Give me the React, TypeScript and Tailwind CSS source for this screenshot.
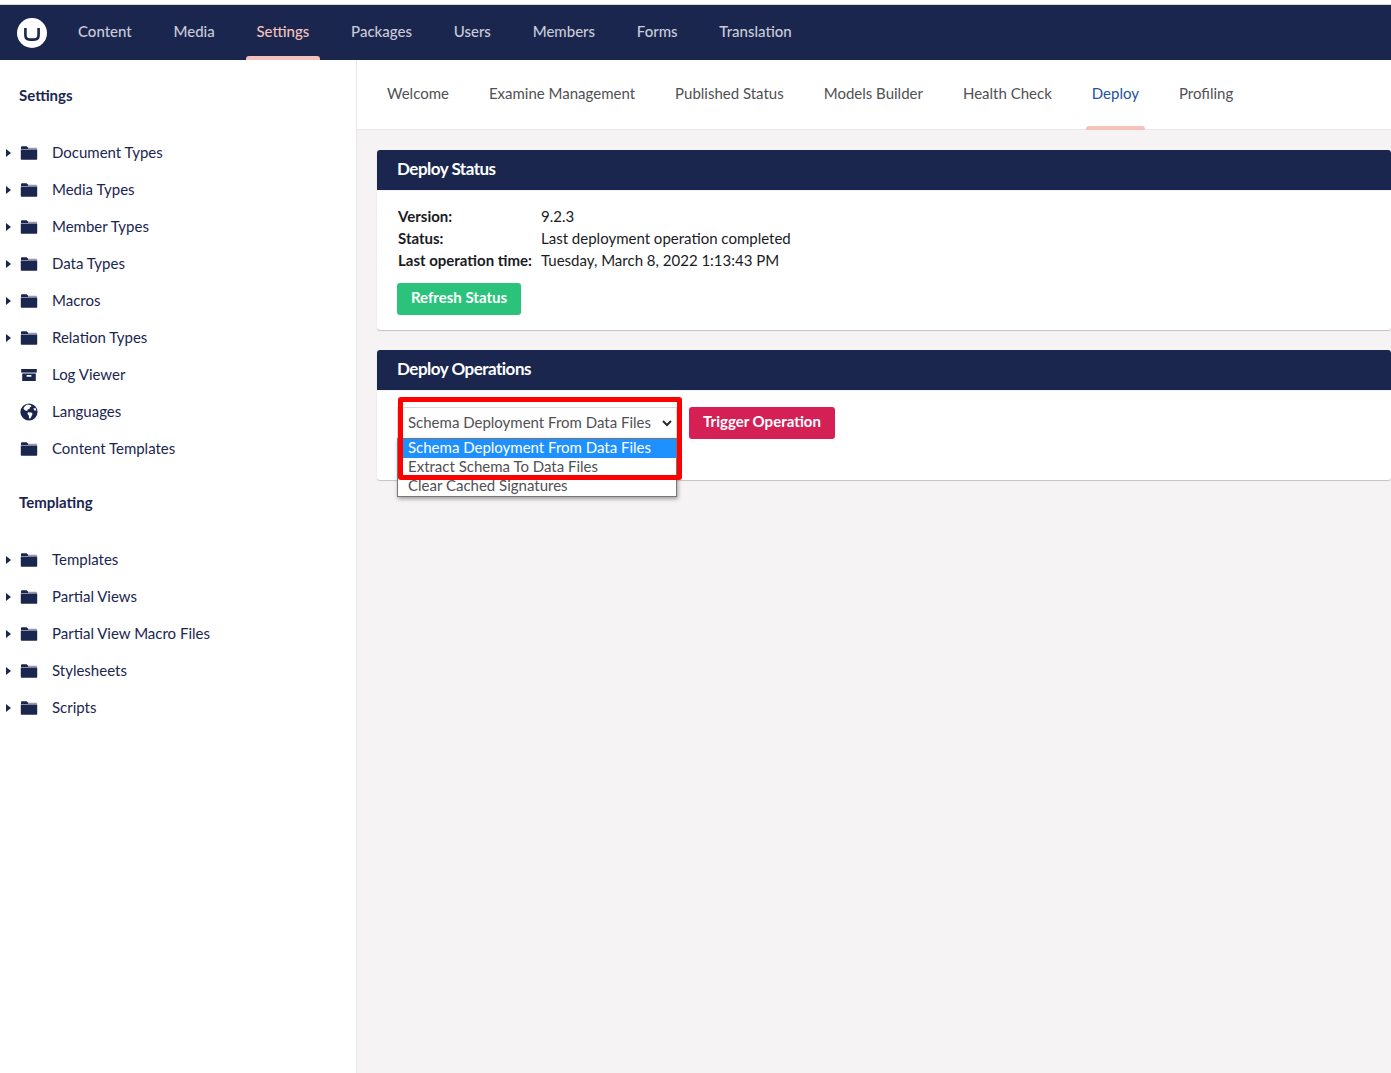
import React from 'react';

const font = '[font-family:Lato,"Open_Sans",sans-serif]';

function Folder() {
  return (
    <svg width="18" height="16" viewBox="0 0 18 16" className="block">
      <path d="M1 4 V2.4 C1 1.6 1.5 1.2 2.2 1.2 H6.6 L8.2 2.8 V4 Z" fill="#1b264f" />
      <path d="M8 2.8 H16 C16.6 2.8 17 3.2 17 3.8 V4.2 H8 Z" fill="#9499ae" />
      <path d="M0.8 4.4 H17.2 V13.8 C17.2 14.4 16.8 14.8 16.2 14.8 H1.8 C1.2 14.8 0.8 14.4 0.8 13.8 Z" fill="#1b264f" />
    </svg>
  );
}

function Archive() {
  return (
    <svg width="18" height="16" viewBox="0 0 18 16" className="block">
      <path d="M1.2 2 H16.8 V5.6 H1.2 Z" fill="#1b264f" />
      <path d="M2.2 6.4 H15.8 V14 H2.2 Z M6.6 8 V9.8 H11.4 V8 Z" fill="#1b264f" fillRule="evenodd" />
    </svg>
  );
}

function Globe() {
  return (
    <svg width="18" height="18" viewBox="0 0 18 18" className="block">
      <circle cx="9" cy="9" r="8.6" fill="#1b264f" />
      <path d="M7 1.6 L10.4 2 L11.6 3.2 L9.8 4.4 L9.4 6 L7.6 6.6 L7.2 8 L4.8 7.2 L3.4 5.6 L4.6 3.4 Z" fill="#fff" />
      <path d="M8 9.2 L11.2 9.4 L12.6 10.8 L11.6 13 L10.4 15.6 L9.2 15.4 L8.8 12.4 L7.4 10.8 Z" fill="#fff" />
      <path d="M13.4 5.4 L15.6 5 L16.4 7.6 L14.4 7.4 Z" fill="#fff" />
    </svg>
  );
}

function TreeItem({ label, icon = 'folder', arrow = true }: { label: string; icon?: string; arrow?: boolean }) {
  return (
    <div className="flex h-[37px] items-center text-[15px] text-[#1b264f]">
      <div className="flex w-[20px] shrink-0 justify-start pl-[6px]">
        {arrow && <div className="h-0 w-0 border-y-[4px] border-l-[5px] border-y-transparent border-l-[#1b264f]" />}
      </div>
      <div className="flex w-[18px] shrink-0 justify-center">
        {icon === 'folder' && <Folder />}
        {icon === 'archive' && <Archive />}
        {icon === 'globe' && <Globe />}
      </div>
      <span className="ml-[14px]">{label}</span>
    </div>
  );
}

function Card({ title, className, children }: { title: string; className: string; children: React.ReactNode }) {
  return (
    <div className={`rounded-[3px] bg-white shadow-[0_1px_1px_rgba(0,0,0,0.2)] ${className}`}>
      <div className="flex h-[40px] items-center rounded-t-[3px] bg-[#1b264f] pb-[2px] pl-[20px] text-[17px] font-bold tracking-[-0.5px] text-white shadow-[0_1px_1px_rgba(0,0,0,0.06)]">
        {title}
      </div>
      {children}
    </div>
  );
}

const navItems = ['Content', 'Media', 'Settings', 'Packages', 'Users', 'Members', 'Forms', 'Translation'];
const tabs = ['Welcome', 'Examine Management', 'Published Status', 'Models Builder', 'Health Check', 'Deploy', 'Profiling'];

export default function App() {
  return (
    <div className={`relative flex h-[1073px] w-full flex-col overflow-hidden bg-white ${font}`}>
      <div className="h-[5px] shrink-0 border-b border-[#d8d8d8] bg-white" />

      {/* top bar */}
      <header className="flex h-[55px] shrink-0 items-stretch bg-[#1b264f]">
        <div className="flex w-[67px] shrink-0 items-center pl-[17px]">
          <div className="flex h-[30px] w-[30px] items-center justify-center rounded-full bg-white">
            <svg width="16" height="13" viewBox="0 0 16 13" className="mt-[3px]">
              <path d="M1.4 0 V7 Q1.4 11.6 6 11.6 H10 Q14.6 11.6 14.6 7 V0" fill="none" stroke="#1b264f" strokeWidth="2.6" />
            </svg>
          </div>
        </div>
        <nav className="flex items-stretch">
          {navItems.map((item) => (
            <div
              key={item}
              className={`relative mr-[19.75px] flex items-center px-[11px] pb-[2px] text-[15px] font-medium ${
                item === 'Settings' ? 'text-[#f5c1bc]' : 'text-[#c9cbd8]'
              }`}
            >
              {item}
              {item === 'Settings' && (
                <div className="absolute bottom-0 left-0 right-0 h-[4px] rounded-t-[3px] bg-[#f5c1bc]" />
              )}
            </div>
          ))}
        </nav>
      </header>

      <div className="flex min-h-0 flex-1">
        {/* sidebar */}
        <aside className="w-[357px] shrink-0 border-r border-[#e9e9eb] bg-white">
          <div className="flex h-[74px] items-center pb-[4px] pl-[19px] text-[15px] font-bold text-[#1b264f]">Settings</div>
          <TreeItem label="Document Types" />
          <TreeItem label="Media Types" />
          <TreeItem label="Member Types" />
          <TreeItem label="Data Types" />
          <TreeItem label="Macros" />
          <TreeItem label="Relation Types" />
          <TreeItem label="Log Viewer" icon="archive" arrow={false} />
          <TreeItem label="Languages" icon="globe" arrow={false} />
          <TreeItem label="Content Templates" arrow={false} />
          <div className="flex h-[74px] items-center pb-[3px] pl-[19px] text-[15px] font-bold text-[#1b264f]">Templating</div>
          <TreeItem label="Templates" />
          <TreeItem label="Partial Views" />
          <TreeItem label="Partial View Macro Files" />
          <TreeItem label="Stylesheets" />
          <TreeItem label="Scripts" />
        </aside>

        <div className="flex min-w-0 flex-1 flex-col bg-[#f5f3f4]">
          {/* tabs */}
          <div className="flex h-[70px] shrink-0 items-stretch border-b border-[#e9e9eb] bg-white pl-[20px]">
            {tabs.map((tab) => (
              <div
                key={tab}
                className={`relative mr-[20px] flex items-center px-[10px] text-[15px] ${
                  tab === 'Deploy' ? 'text-[#2152a3]' : 'text-[#515054]'
                }`}
              >
                <span className="relative top-[-1px]">{tab}</span>
                {tab === 'Deploy' && (
                  <div className="absolute bottom-[-1px] left-[4px] right-[4px] h-[4px] rounded-t-[3px] bg-[#f5c1bc]" />
                )}
              </div>
            ))}
          </div>

          {/* panels */}
          <div className="flex flex-col gap-[20px] pl-[20px] pt-[20px]">
            <Card title="Deploy Status" className="h-[180px]">
              <div className="pl-[21px] pt-[15px] text-[15px] leading-[22px] text-[#1b1b1f]">
                <div className="flex">
                  <span className="w-[143px] font-bold">Version:</span>
                  <span>9.2.3</span>
                </div>
                <div className="flex">
                  <span className="w-[143px] font-bold">Status:</span>
                  <span>Last deployment operation completed</span>
                </div>
                <div className="flex">
                  <span className="w-[143px] font-bold">Last operation time:</span>
                  <span>Tuesday, March 8, 2022 1:13:43 PM</span>
                </div>
              </div>
              <button className="ml-[20px] mt-[12px] flex h-[32px] w-[124px] items-center justify-center rounded-[3px] bg-[#2bc37c] pb-[4px] text-[15px] font-bold text-white">
                Refresh Status
              </button>
            </Card>

            <Card title="Deploy Operations" className="h-[130px]">
              <div className="flex gap-[12px] pl-[20px] pt-[17px]">
                <div className="flex h-[32px] w-[280px] items-center justify-between border border-[#d8d7d9] bg-white pb-[2px] pl-[10px] pr-[4px] text-[15px] text-[#515054]">
                  <span>Schema Deployment From Data Files</span>
                  <svg width="10" height="7" viewBox="0 0 10 7" className="mt-[2px]">
                    <path d="M1 1 L5 5 L9 1" fill="none" stroke="#2a2a2a" strokeWidth="2" />
                  </svg>
                </div>
                <button className="flex h-[32px] w-[146px] items-center justify-center rounded-[3px] bg-[#d42054] pb-[3px] text-[15px] font-bold text-white">
                  Trigger Operation
                </button>
              </div>
            </Card>
          </div>
        </div>
      </div>

      {/* open select list */}
      <div className="absolute left-[397px] top-[438px] w-[280px] border border-[#767676] bg-white text-[15px] leading-[17px] text-[#515054] shadow-[1px_2px_4px_rgba(0,0,0,0.35)]">
        <div className="h-[19px] bg-[#1e90ff] pl-[10px] text-white">Schema Deployment From Data Files</div>
        <div className="h-[19px] pl-[10px]">Extract Schema To Data Files</div>
        <div className="h-[19px] pl-[10px]">Clear Cached Signatures</div>
      </div>

      {/* red highlight */}
      <div className="absolute left-[398px] top-[397px] h-[83px] w-[284px] rounded-[3px] border-[5px] border-[#ff0000]" />
    </div>
  );
}
